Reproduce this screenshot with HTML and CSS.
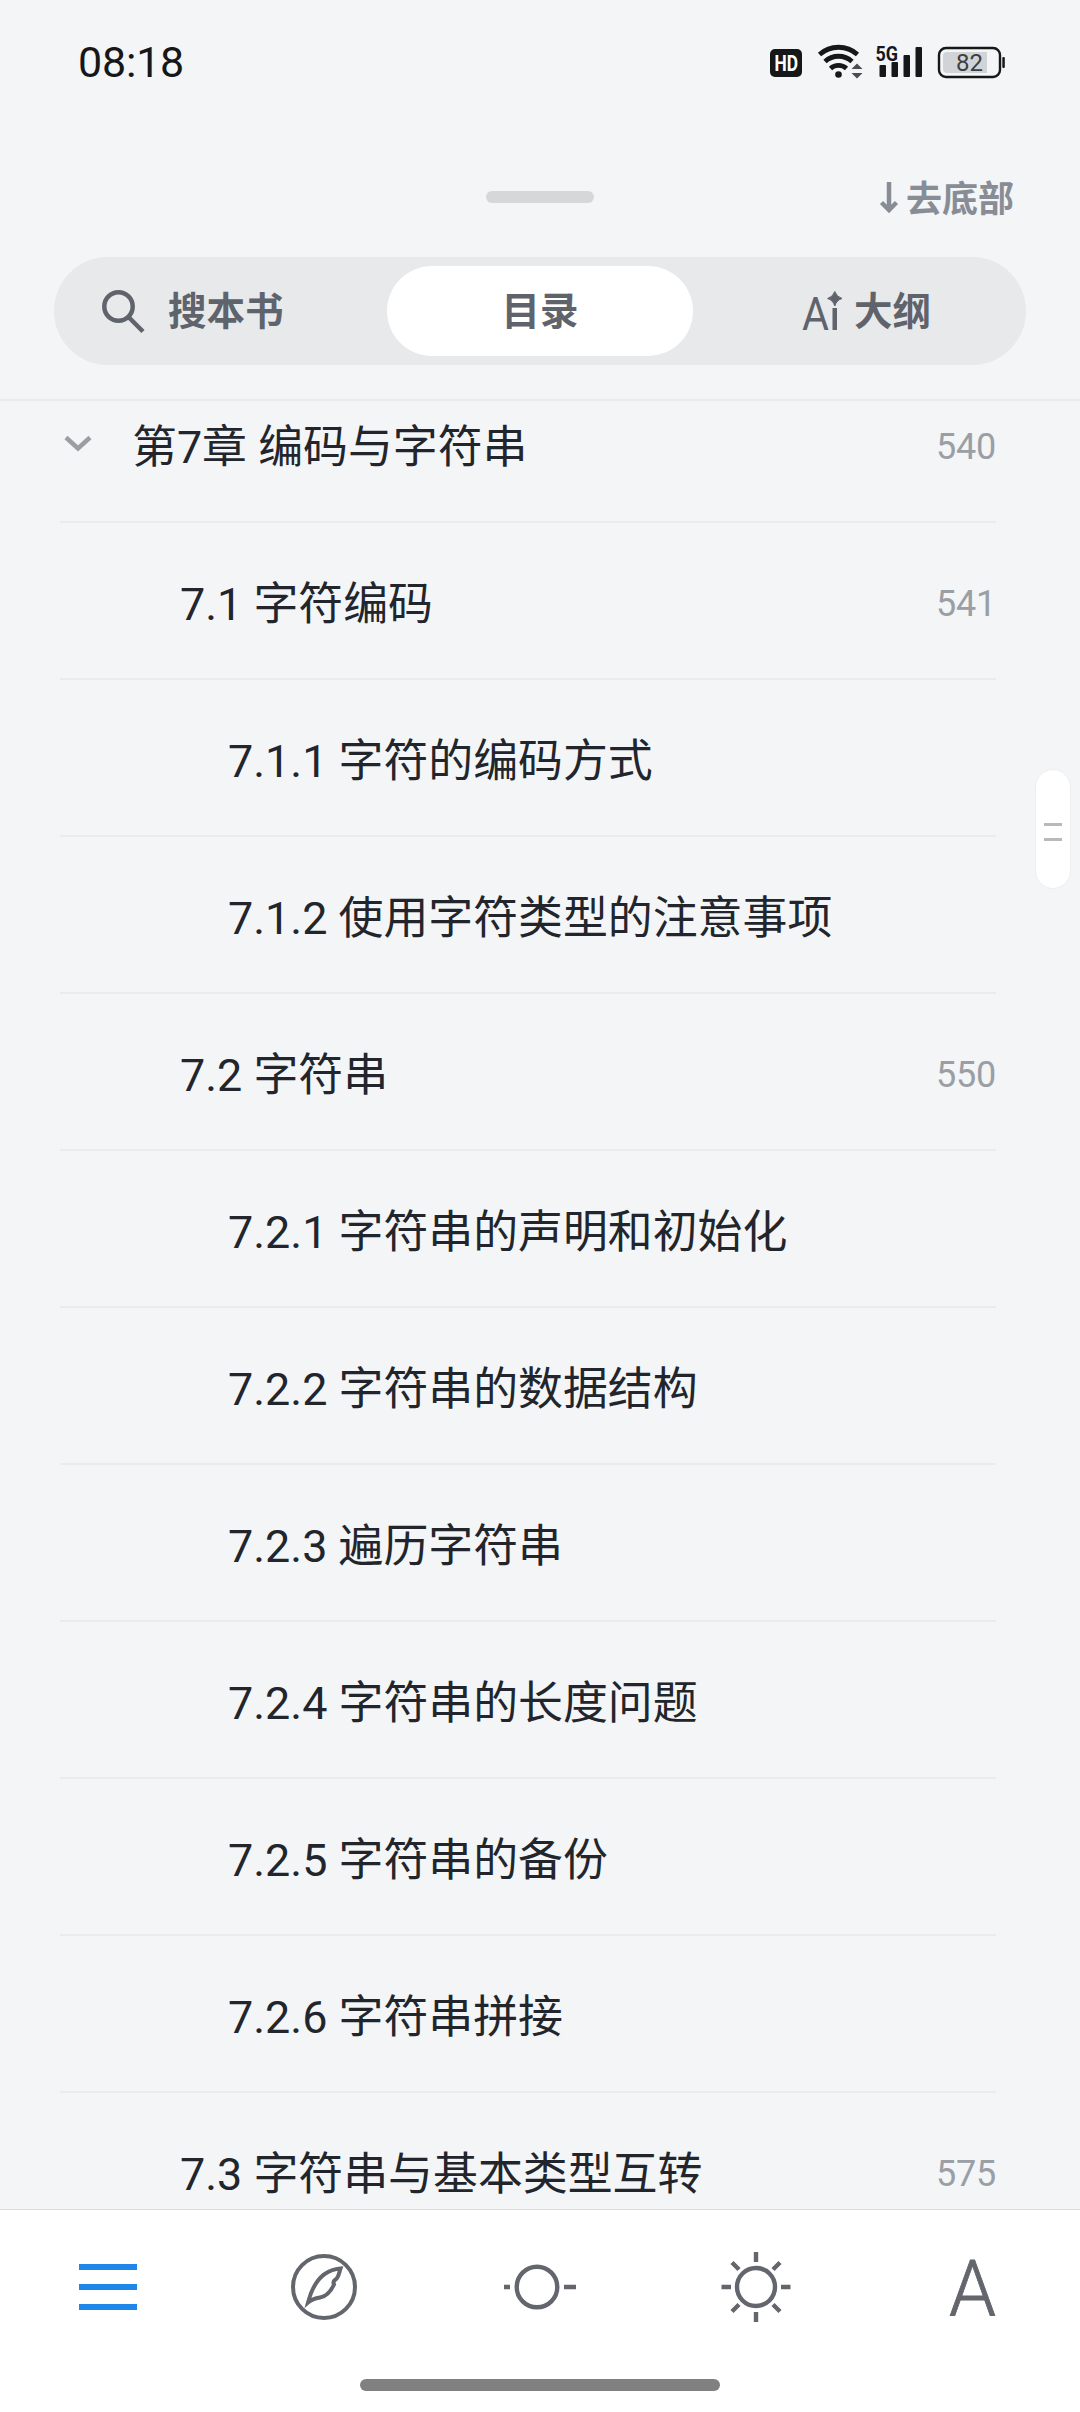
FILE: index.html
```html
<!DOCTYPE html>
<html lang="zh-CN">
<head>
    <meta charset="UTF-8">
    <meta name="viewport" content="width=device-width, initial-scale=1.0">
    <title>目录</title>
    <link rel="stylesheet" href="styles.css">
</head>
<body>
    <div class="status-bar">
        <span class="clock">08:18</span>
        <!-- HD, wifi, 5G signal, battery -->
        <svg class="status-icons" width="240" height="40" viewBox="768 42 240 40">
            <rect x="770" y="49" width="32" height="28" rx="5" fill="#151718"/>
            <text x="774.5" y="70.5" class="hd-text" textLength="23.5" lengthAdjust="spacingAndGlyphs">HD</text>
            <g fill="none" stroke="#151718" stroke-width="4.8">
                <path d="M819.500 54.500a28.500 28.500 0 0 1 38 0"/>
                <path d="M825 61.500a20 20 0 0 1 27 0"/>
                <path d="M830.500 68.500a12 12 0 0 1 16 0"/>
            </g>
            <circle cx="838.500" cy="74.500" r="3.300" fill="#151718"/>
            <path d="M851.500 69l5.500-5.500 5.500 5.500zM851.500 73l5.500 5.500 5.500-5.500z" fill="#4a4d50"/>
            <text x="875.500" y="60.500" class="net-text" textLength="22.500" lengthAdjust="spacingAndGlyphs">5G</text>
            <g fill="#151718">
                <rect x="879.500" y="65" width="6.500" height="12" rx="1"/>
                <rect x="891.500" y="62" width="6.500" height="15" rx="1"/>
                <rect x="903.500" y="55" width="6.500" height="22" rx="1"/>
                <rect x="915.500" y="47" width="6.500" height="30" rx="1"/>
            </g>
            <rect x="939" y="48" width="61" height="29" rx="7" fill="none" stroke="#151718" stroke-width="2.400"/>
            <path d="M947 52h40v21h-40a4 4 0 0 1-4-4v-13a4 4 0 0 1 4-4z" fill="#d1d4d6"/>
            <rect x="1002.300" y="57" width="2.500" height="11" rx="1" fill="#151718"/>
            <text x="969.500" y="71" class="battery-text">82</text>
        </svg>
    </div>

    <div class="sheet-top">
        <div class="grabber"></div>
        <a class="to-bottom" href="#">
            <svg width="18" height="32" viewBox="0 0 18 32" fill="none" stroke="#888d95" stroke-width="4.500">
                <path d="M9 0v28M1.500 20.500L9 28l7.500-7.500"/>
            </svg>
            <span>去底部</span>
        </a>
    </div>

    <div class="tabs">
        <a class="tab tab-search" href="#">
            <svg width="44" height="44" viewBox="0 0 44 44" fill="none" stroke="#5f636b" stroke-width="4.500">
                <circle cx="17.500" cy="17.500" r="14.200"/>
                <path d="M28 28.500L42 42.500"/>
            </svg>
            <span>搜本书</span>
        </a>
        <a class="tab active" href="#"><span>目录</span></a>
        <a class="tab tab-ai" href="#">
            <svg width="41" height="40" viewBox="0 0 41 40">
                <text x="0" y="39" class="ai-text" textLength="27" lengthAdjust="spacingAndGlyphs">A</text>
                <rect x="30.500" y="17" width="4.500" height="22" fill="#5f636b"/>
                <path d="M32.800 0.500q1.700 5.300 7.200 7q-5.500 1.700-7.200 7.500q-1.700-5.800-7.200-7.500q5.500-1.700 7.200-7z" fill="#5f636b" stroke="#5f636b"/>
            </svg>
            <span>大纲</span>
        </a>
    </div>

    <div class="toc">
        <ul class="toc-list">
            <li class="chapter">
                <svg class="chevron" width="28" height="18" viewBox="0 0 28 18" fill="none" stroke="#9b9fa4" stroke-width="4.500">
                    <path d="M2 2.500l12 11 12-11"/>
                </svg>
                <span class="title">第7章 编码与字符串</span><span class="page">540</span>
            </li>
            <li class="section"><span class="title">7.1 字符编码</span><span class="page">541</span></li>
            <li class="sub"><span class="title">7.1.1 字符的编码方式</span></li>
            <li class="sub"><span class="title">7.1.2 使用字符类型的注意事项</span></li>
            <li class="section"><span class="title">7.2 字符串</span><span class="page">550</span></li>
            <li class="sub"><span class="title">7.2.1 字符串的声明和初始化</span></li>
            <li class="sub"><span class="title">7.2.2 字符串的数据结构</span></li>
            <li class="sub"><span class="title">7.2.3 遍历字符串</span></li>
            <li class="sub"><span class="title">7.2.4 字符串的长度问题</span></li>
            <li class="sub"><span class="title">7.2.5 字符串的备份</span></li>
            <li class="sub"><span class="title">7.2.6 字符串拼接</span></li>
            <li class="section"><span class="title">7.3 字符串与基本类型互转</span><span class="page">575</span></li>
        </ul>
        <div class="scroll-thumb"><i></i><i></i></div>
    </div>

    <div class="bottom-bar">
        <div class="nav">
            <a href="#">
                <svg width="58" height="46" viewBox="0 0 58 46" fill="#1f87e8">
                    <rect width="58" height="6"/>
                    <rect y="20" width="58" height="6"/>
                    <rect y="40" width="58" height="6"/>
                </svg>
            </a>
            <a href="#">
                <svg width="66" height="66" viewBox="0 0 66 66" fill="none" stroke="#63666c" stroke-width="4">
                    <circle cx="33" cy="33" r="31"/>
                    <path d="M17 48.500C21 33 29 16 49.500 14.500C48 19 47.500 24 44.500 25.500Q41.500 27.500 43 30.500C40 37 35 42.500 29 43.500C23 44.500 20.500 45.500 17 48.500z"/>
                </svg>
            </a>
            <a href="#">
                <svg width="72" height="46" viewBox="0 0 72 46" fill="none" stroke="#63666c" stroke-width="4.400">
                    <circle cx="33" cy="23" r="20.300"/>
                    <path d="M0 23h6M60 23h12"/>
                </svg>
            </a>
            <a href="#">
                <svg width="70" height="70" viewBox="-35 -35 70 70" fill="none" stroke="#63666c" stroke-width="4.400">
                    <circle r="19"/>
                    <path d="M0-35v10M0 25v10M-34.500 0h9.500M25 0h9.500M-24-24.500l7 7M24-24.500l-7 7M-24 24.500l7-7M24 24.500l-7-7"/>
                </svg>
            </a>
            <a href="#">
                <svg width="46" height="58" viewBox="0 0 46 58">
                    <text x="0" y="57.500" class="font-text" textLength="47" lengthAdjust="spacingAndGlyphs">A</text>
                </svg>
            </a>
        </div>
        <div class="home-indicator"></div>
    </div>
</body>
</html>
```
FILE: styles.css
```css
* {
    box-sizing: border-box;
}
body {
    font-family: Roboto, 'Noto Sans CJK SC', sans-serif;
    background: #f3f5f7;
    margin: 0;
    height: 2412px;
    display: flex;
    flex-direction: column;
    overflow: hidden;
    color: #22262c;
}
a {
    color: inherit;
    text-decoration: none;
}
svg {
    display: block;
    flex: none;
    overflow: visible;
}
.status-bar {
    height: 124px;
    padding: 0 72px 0 78px;
    display: flex;
    align-items: center;
    justify-content: space-between;
}
.clock {
    font-size: 43px;
    line-height: 60px;
    letter-spacing: -0.2px;
    color: #151718;
}
.hd-text {
    font-size: 22px;
    font-weight: 700;
    fill: #fff;
}
.net-text {
    font-size: 21px;
    font-weight: 700;
    fill: #151718;
}
.battery-text {
    font-size: 24px;
    fill: #3c3f42;
    text-anchor: middle;
}
.sheet-top {
    height: 133px;
    padding: 0 66px 0 486px;
    display: flex;
    justify-content: space-between;
}
.grabber {
    width: 108px;
    height: 12px;
    margin-top: 67px;
    border-radius: 6px;
    background: #d5d7d9;
}
.to-bottom {
    display: flex;
    align-items: center;
    gap: 8px;
    height: 40px;
    margin-top: 54px;
    font-size: 36px;
    font-weight: 700;
    color: #888d95;
}
.to-bottom span {
    padding-bottom: 4px;
}
.tabs {
    height: 108px;
    margin: 0 54px 34px;
    padding: 9px;
    border-radius: 54px;
    background: #e7e9ea;
    display: grid;
    grid-template-columns: 1fr 306px 1fr;
    gap: 18px;
}
.tab {
    display: flex;
    align-items: center;
    justify-content: center;
    font-size: 38.5px;
    font-weight: 700;
    color: #5f636b;
}
.tab span {
    padding-bottom: 7px;
}
.tab.active {
    border-radius: 45px;
    background: #fff;
}
.tab-search {
    justify-content: flex-start;
    padding-left: 38px;
    gap: 23px;
}
.tab-ai {
    justify-content: flex-start;
    padding-left: 91px;
    gap: 11px;
}
.toc {
    position: relative;
    height: 1810px;
    border-top: 2px solid #e9ebed;
    overflow: hidden;
}
.toc-list {
    list-style: none;
    margin: -35px 84px 0 60px;
    padding: 0;
}
.toc-list li {
    height: 157px;
    border-bottom: 2px solid #e9ebed;
    display: flex;
    align-items: center;
}
.title {
    flex: 1;
    font-size: 44.9px;
}
.page {
    padding-top: 7px;
    font-size: 36px;
    letter-spacing: -0.2px;
    color: #9a9ea5;
}
.chevron {
    margin: 0 40px 0 4px;
}
.section {
    padding-left: 120px;
}
.sub {
    padding-left: 168px;
}
/* fast scroll handle over the list */
.scroll-thumb {
    position: absolute;
    top: 368px;
    right: 9px;
    width: 36px;
    height: 120px;
    padding-top: 5px;
    border-radius: 18px;
    border: 1px solid #eceeef;
    background: #fff;
    display: flex;
    flex-direction: column;
    align-items: center;
    justify-content: center;
    gap: 12px;
}
.scroll-thumb i {
    width: 18px;
    height: 3px;
    background: #b9b9b9;
}
.bottom-bar {
    height: 203px;
    border-top: 1px solid #d9dbdc;
    background: #fff;
    display: flex;
    flex-direction: column;
    align-items: center;
}
.nav {
    width: 100%;
    height: 154px;
    display: grid;
    grid-template-columns: repeat(5, 1fr);
    align-items: center;
    justify-items: center;
}
.font-text {
    font-size: 78px;
    font-weight: 300;
    fill: #63666c;
    stroke: #63666c;
    stroke-width: 0.8px;
}
.ai-text {
    font-size: 46px;
    font-weight: 400;
    fill: #5f636b;
}
.home-indicator {
    width: 360px;
    height: 12px;
    margin-top: 15px;
    border-radius: 6px;
    background: #808080;
}
```
